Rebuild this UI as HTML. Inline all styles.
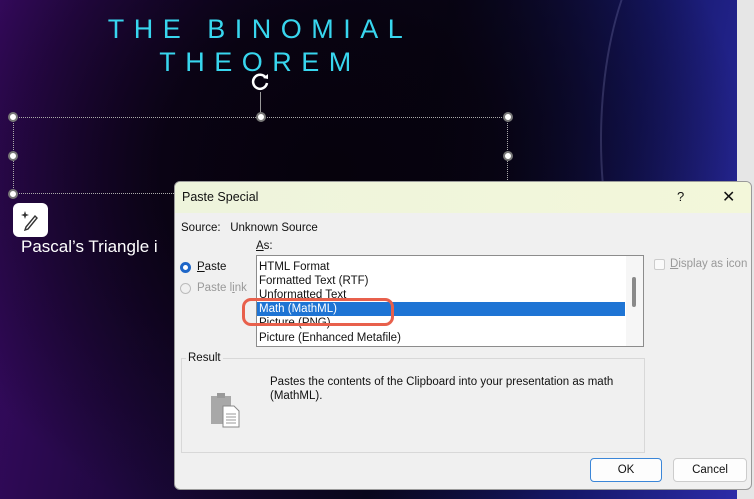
<!DOCTYPE html>
<html><head><style>
*{margin:0;padding:0;box-sizing:border-box}
html,body{width:754px;height:499px;overflow:hidden}
body{position:relative;font-family:"Liberation Sans",sans-serif;background:#e6e6e6}
#slide{position:absolute;left:0;top:0;width:737px;height:499px;background:
radial-gradient(ellipse 420px 380px at 330px 170px,#06020c 0%,rgba(6,2,12,.85) 40%,rgba(6,2,12,0) 100%),
linear-gradient(100deg,#3a0a66 0%,#1a0838 30%,#0a0820 55%,#16186a 80%,#2c2ca8 100%);overflow:hidden}
.arc{position:absolute;border-radius:50%;border:2px solid rgba(140,140,230,.35)}
h1{position:absolute;left:0;width:520px;text-align:center;color:#38d6ee;font-weight:normal;font-size:27px;letter-spacing:9.5px;line-height:33px;top:13px}
.h{position:absolute;width:10px;height:10px;border-radius:50%;background:#fff;border:2px solid #777}
.sel{position:absolute;left:13px;top:117px;width:495px;height:77px;border:1px dotted #aaa}
.dlg{position:absolute;left:174px;top:181px;width:578px;height:309px;background:#f0f0f0;border:1px solid #9a9a9a;border-radius:6px;overflow:hidden;font-size:11.5px;color:#111}
.tb{height:31px;background:linear-gradient(90deg,#eef4dc,#f3f7da);position:relative}
.a{position:absolute;white-space:nowrap}
.lb{position:absolute;left:81px;top:73px;width:388px;height:92px;background:#fff;border:1px solid #8c8c8c;overflow:hidden}
.it{position:absolute;left:2px;height:14px;line-height:14px;font-size:11.5px}
.btn{position:absolute;top:276px;height:24px;border:1px solid #ccc;background:#fdfdfd;border-radius:4px;text-align:center;line-height:22px}
</style></head><body>
<div id="slide">
<div class="arc" style="left:600px;top:-80px;width:180px;height:440px;border-color:rgba(180,180,240,.2)"></div>
<h1>THE BINOMIAL<br>THEOREM</h1>
<svg style="position:absolute;left:250px;top:70px" width="22" height="22" viewBox="0 0 22 22"><path d="M16 8a7 7 0 1 0 1 5" fill="none" stroke="#fff" stroke-width="2.5"/><path d="M13 8l5 1 0-5z" fill="#fff"/></svg>
<div style="position:absolute;left:260px;top:92px;width:1px;height:25px;background:#999"></div>
<div class="sel"></div>
<div class="h" style="left:8px;top:112px"></div><div class="h" style="left:256px;top:112px"></div><div class="h" style="left:503px;top:112px"></div>
<div class="h" style="left:8px;top:151px"></div><div class="h" style="left:503px;top:151px"></div>
<div class="h" style="left:8px;top:189px"></div>
<div style="position:absolute;left:13px;top:203px;width:35px;height:34px;background:#fff;border-radius:6px"></div>
<svg style="position:absolute;left:20px;top:209px" width="22" height="22" viewBox="0 0 22 22"><path d="M6 18l9-11 2 2-9 11-3 1z" fill="none" stroke="#333" stroke-width="1.4"/><path d="M5 2l1 3 3 1-3 1-1 3-1-3-3-1 3-1z" fill="#333"/></svg>
<div class="a" style="left:21px;top:237px;color:#fff;font-size:17px">Pascal’s Triangle i</div>
</div>
<div class="dlg">
<div class="tb"><div class="a" style="left:7px;top:8px;font-size:12.5px">Paste Special</div>
<div class="a" style="left:502px;top:7px;font-size:13px">?</div>
<div class="a" style="left:547px;top:5px;font-size:16px">✕</div></div>
<div class="a" style="left:6px;top:40px">Source:&nbsp;&nbsp; Unknown Source</div>
<div class="a" style="left:81px;top:58px"><u>A</u>s:</div>
<div class="a" style="left:5px;top:80px;width:11px;height:11px;border-radius:50%;background:#fff;border:3px solid #1e66c8"></div>
<div class="a" style="left:22px;top:79px"><u>P</u>aste</div>
<div class="a" style="left:5px;top:101px;width:11px;height:11px;border-radius:50%;border:1px solid #bbb"></div>
<div class="a" style="left:22px;top:100px;color:#999">Paste l<u>i</u>nk</div>
<div class="lb">
<div class="it" style="top:4px">HTML Format</div>
<div class="it" style="top:18px">Formatted Text (RTF)</div>
<div class="it" style="top:32px">Unformatted Text</div>
<div class="it" style="top:46px;left:0;width:368px;background:#1e74d4;color:#fff;padding-left:2px">Math (MathML)</div>
<div class="it" style="top:60px">Picture (PNG)</div>
<div class="it" style="top:75px">Picture (Enhanced Metafile)</div>
<div style="position:absolute;right:0;top:0;width:17px;height:92px;background:#f6f6f6"></div>
<div style="position:absolute;right:7px;top:21px;width:4px;height:30px;background:#8a8a8a;border-radius:2px"></div>
</div>
<div class="a" style="left:67px;top:116px;width:152px;height:28px;border:3px solid #e8604c;border-radius:9px"></div>
<div class="a" style="left:479px;top:77px;width:11px;height:11px;border:1px solid #ccc;border-radius:2px;background:#fafafa"></div>
<div class="a" style="left:495px;top:76px;color:#999"><u>D</u>isplay as icon</div>
<div class="a" style="left:6px;top:176px;width:464px;height:95px;border:1px solid #d8d8d8"></div>
<div class="a" style="left:11px;top:170px;background:#f0f0f0;padding:0 2px">Result</div>
<svg class="a" style="left:35px;top:210px" width="30" height="36" viewBox="0 0 30 36"><rect x="1" y="4" width="20" height="28" fill="#a8a8a8"/><rect x="7" y="1" width="8" height="5" fill="#999"/><path d="M13 14h11l5 5v16H13z" fill="#fff" stroke="#888"/><path d="M16 22h10M16 25h10M16 28h10M16 31h10" stroke="#999"/></svg>
<div class="a" style="left:95px;top:194px">Pastes the contents of the Clipboard into your presentation as math</div>
<div class="a" style="left:95px;top:208px">(MathML).</div>
<div class="btn" style="left:415px;width:72px;border:1px solid #3b86d8">OK</div>
<div class="btn" style="left:498px;width:74px">Cancel</div>
</div>
</body></html>
